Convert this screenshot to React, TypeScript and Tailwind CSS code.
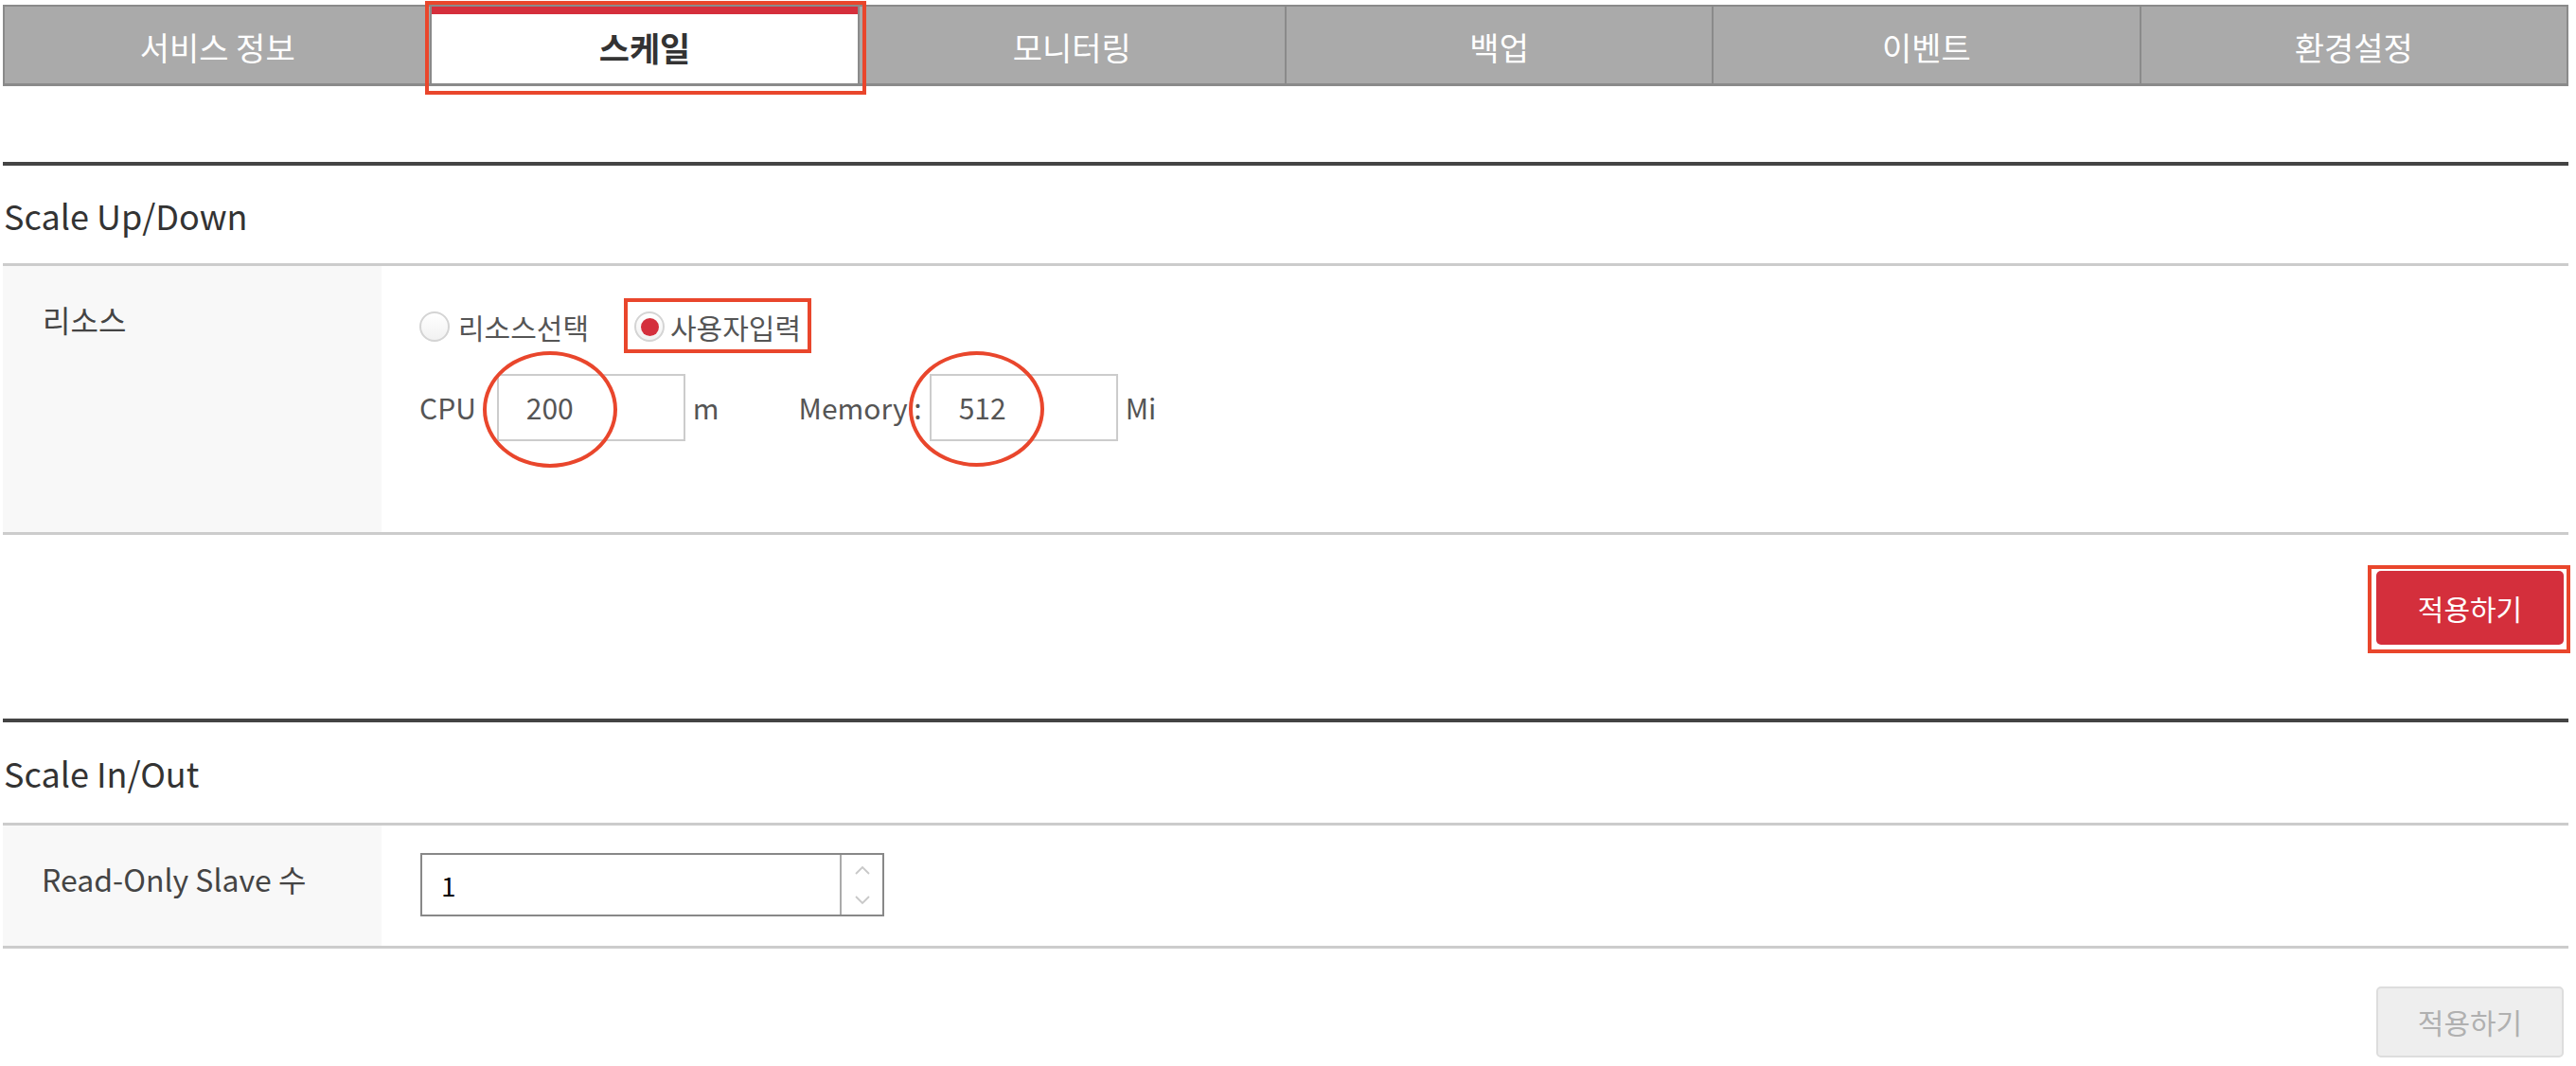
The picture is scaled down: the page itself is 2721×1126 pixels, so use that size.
import React from "react";

const tabs = ["서비스 정보", "스케일", "모니터링", "백업", "이벤트", "환경설정"];

function Radio({ checked }: { checked?: boolean }) {
  return (
    <span className="w-[32px] h-[32px] rounded-full border-2 border-[#d4d4d4] bg-[linear-gradient(#ffffff,#f1f1f1)] flex items-center justify-center shrink-0">
      {checked && <span className="w-[19px] h-[19px] rounded-full bg-[#d42f3c]" />}
    </span>
  );
}

export default function App() {
  return (
    <div className="relative w-[2721px] h-[1126px] bg-white font-['Noto_Sans_CJK_KR','Noto_Sans',sans-serif] overflow-hidden">
      <div className="ml-[3px] w-[2710px] pt-[5px]">
        {/* Tab bar */}
        <div className="flex h-[86px] bg-[#aaaaaa] border-t-2 border-b-[3px] border-x-2 border-[#8a8a8a]">
          {tabs.map((t, i) => {
            const active = i === 1;
            return (
              <div
                key={t}
                className={
                  active
                    ? "relative flex-1 flex items-center justify-center bg-white border-l-2 border-[#8a8a8a] text-[35px] text-[#333] font-bold"
                    : i === 0
                    ? "relative flex-1 flex items-center justify-center text-[34px] text-white"
                    : "relative flex-1 flex items-center justify-center border-l-2 border-[#8a8a8a] text-[34px] text-white"
                }
              >
                {active && <div className="absolute left-0 right-0 top-0 h-[8px] bg-[#d52f3c]" />}
                <span className={active ? "mt-[6px]" : "mt-[4px]"}>{t}</span>
              </div>
            );
          })}
        </div>

        {/* Scale Up/Down */}
        <div className="mt-[80px] h-[4px] bg-[#444]" />
        <div className="h-[103px] flex items-center text-[36px] text-[#333] pl-[1px]">Scale Up/Down</div>
        <div className="border-t-[3px] border-[#cccccc]" />
        <div className="flex h-[284px] border-b-[3px] border-[#cccccc]">
          <div className="w-[400px] bg-[#f8f8f8] pl-[42px] pt-[34px] text-[32px] leading-[44px] text-[#444]">리소스</div>
          <div className="flex-1 pl-[40px] pt-[44px] text-[30px] text-[#555]">
            <div className="flex items-center h-[40px]">
              <Radio />
              <span className="ml-[9px] leading-[40px]">리소스선택</span>
              <span className="ml-[48px]" />
              <Radio checked />
              <span className="ml-[6px] leading-[40px]">사용자입력</span>
            </div>
            <div className="flex items-center mt-[30px] h-[71px]">
              <span>CPU</span>
              <div className="ml-[22px] w-[199px] h-[71px] border-2 border-[#cccccc] flex items-center pl-[29px]">200</div>
              <span className="ml-[8px]">m</span>
              <span className="ml-[84px]">Memory :</span>
              <div className="ml-[8px] w-[199px] h-[71px] border-2 border-[#cccccc] flex items-center pl-[29px]">512</div>
              <span className="ml-[8px]">Mi</span>
            </div>
          </div>
        </div>
        <div className="h-[194px] pt-[38px] flex justify-end pr-[5px]">
          <button className="w-[198px] h-[78px] rounded-[5px] bg-[#d42f3c] text-white text-[30px]">적용하기</button>
        </div>

        {/* Scale In/Out */}
        <div className="h-[4px] bg-[#444]" />
        <div className="h-[106px] flex items-center text-[36px] text-[#333] pl-[1px]">Scale In/Out</div>
        <div className="border-t-[3px] border-[#cccccc]" />
        <div className="flex h-[130px] border-b-[3px] border-[#cccccc]">
          <div className="w-[400px] bg-[#f8f8f8] pl-[41px] pt-[34px] text-[32px] leading-[44px] text-[#444]">Read-Only Slave 수</div>
          <div className="flex-1 pl-[41px] pt-[29px]">
            <div className="flex w-[490px] h-[67px] border-2 border-[#888]">
              <div className="flex-1 flex items-center pl-[20px] text-[28px] text-black">1</div>
              <div className="w-[45px] border-l-2 border-[#aaa] flex flex-col items-center justify-center gap-[22px]">
                <svg width="16" height="10" viewBox="0 0 16 10"><path d="M1 9 L8 2 L15 9" fill="none" stroke="#c8c8c8" strokeWidth="1.8" /></svg>
                <svg width="16" height="10" viewBox="0 0 16 10"><path d="M1 1 L8 8 L15 1" fill="none" stroke="#c8c8c8" strokeWidth="1.8" /></svg>
              </div>
            </div>
          </div>
        </div>
        <div className="pt-[40px] flex justify-end pr-[5px]">
          <button className="w-[198px] h-[75px] rounded-[5px] bg-[#eeeeee] border-2 border-[#dddddd] text-[#b0b0b0] text-[30px]">적용하기</button>
        </div>
      </div>

      {/* Annotations */}
      <div className="absolute left-[449px] top-[1px] w-[466px] h-[99px] border-4 border-[#e9462c]" />
      <div className="absolute left-[659px] top-[315px] w-[198px] h-[58px] border-4 border-[#e9462c]" />
      <div className="absolute left-[510px] top-[371px] w-[142px] h-[123px] rounded-[50%] border-4 border-[#e9462c]" />
      <div className="absolute left-[960px] top-[371px] w-[143px] h-[122px] rounded-[50%] border-4 border-[#e9462c]" />
      <div className="absolute left-[2501px] top-[597px] w-[214px] h-[93px] border-4 border-[#e9462c]" />
    </div>
  );
}
